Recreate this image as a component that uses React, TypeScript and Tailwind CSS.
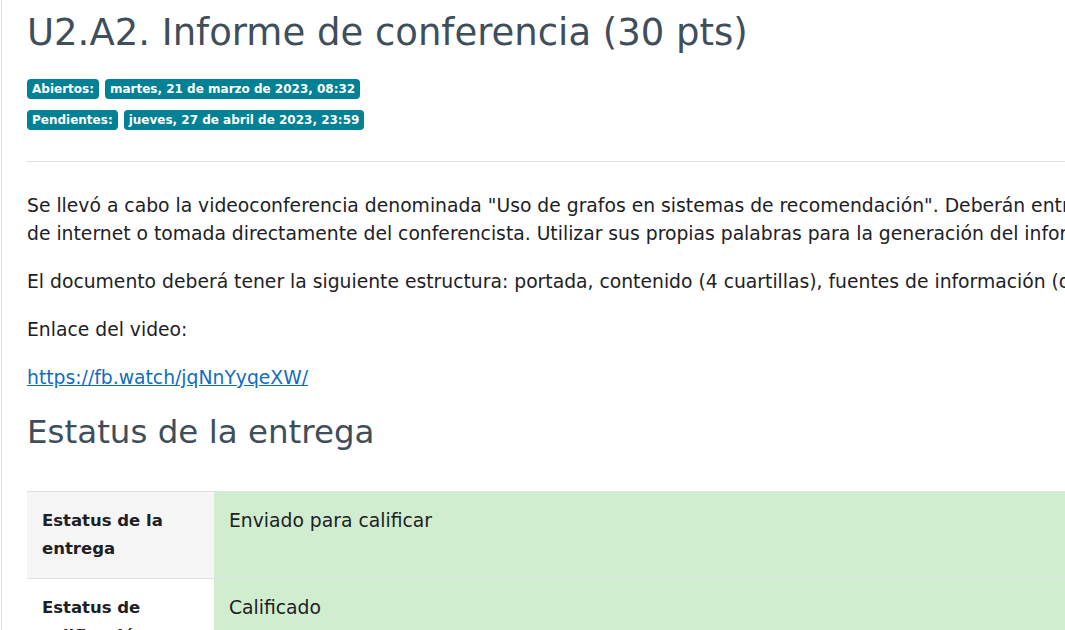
export default function App() {
  return (
    <div
      className="h-[630px] w-[1065px] overflow-hidden bg-white text-[#1d2125]"
      style={{ fontFamily: "'DejaVu Sans', Inter, sans-serif" }}
    >
      <div className="ml-[1px] h-full w-[1400px] border-l border-[#dee2e6] pl-[25px]">
        <h1 className="pt-[11px] text-[37px] leading-[44px] font-normal text-[#3f4e5b]">
          U2.A2. Informe de conferencia (30 pts)
        </h1>

        <div className="mt-[24px] space-y-[11px] text-[12px] font-bold leading-[20px] text-white">
          <div className="flex gap-[6px]">
            <span className="rounded-[4px] bg-[#008196] px-[5px]">Abiertos:</span>
            <span className="rounded-[4px] bg-[#008196] px-[5px]">martes, 21 de marzo de 2023, 08:32</span>
          </div>
          <div className="flex gap-[6px]">
            <span className="rounded-[4px] bg-[#008196] px-[5px]">Pendientes:</span>
            <span className="rounded-[4px] bg-[#008196] px-[5px]">jueves, 27 de abril de 2023, 23:59</span>
          </div>
        </div>

        <hr className="mt-[31px] border-t border-[#dee2e6]" />

        <div className="mt-[30px] text-[18.75px] leading-[28px]">
          <p className="whitespace-nowrap">
            Se llevó a cabo la videoconferencia denominada "Uso de grafos en sistemas de recomendación". Deberán entregar un informe de la conferencia, la información puede ser obtenida
            <br />
            de internet o tomada directamente del conferencista. Utilizar sus propias palabras para la generación del informe.
          </p>
          <p className="mt-[20px] whitespace-nowrap">
            El documento deberá tener la siguiente estructura: portada, contenido (4 cuartillas), fuentes de información (opcional) y conclusiones.
          </p>
          <p className="mt-[20px]">Enlace del video:</p>
          <p className="mt-[20px]">
            <a href="#" className="text-[#0f6cbf] underline">
              https://fb.watch/jqNnYyqeXW/
            </a>
          </p>
        </div>

        <h2 className="mt-[20px] text-[32.5px] leading-[40px] font-normal text-[#3f4e5b]">
          Estatus de la entrega
        </h2>

        <table className="mt-[39px] w-full border-collapse text-[18.75px] leading-[28px]">
          <tbody>
            <tr className="border-t border-[#dee2e6]">
              <th className="w-[187px] bg-[#f5f5f5] px-[15px] pt-[15px] pb-[15px] text-left align-top text-[16.5px] font-semibold">
                Estatus de la entrega
              </th>
              <td className="bg-[#d0eecf] px-[15px] pt-[15px] align-top">Enviado para calificar</td>
            </tr>
            <tr className="border-t border-[#dee2e6]">
              <th className="w-[187px] bg-white px-[15px] pt-[15px] pb-[15px] text-left align-top text-[16.5px] font-semibold">
                Estatus de calificación
              </th>
              <td className="bg-[#d0eecf] px-[15px] pt-[15px] align-top">Calificado</td>
            </tr>
          </tbody>
        </table>
      </div>
    </div>
  );
}
